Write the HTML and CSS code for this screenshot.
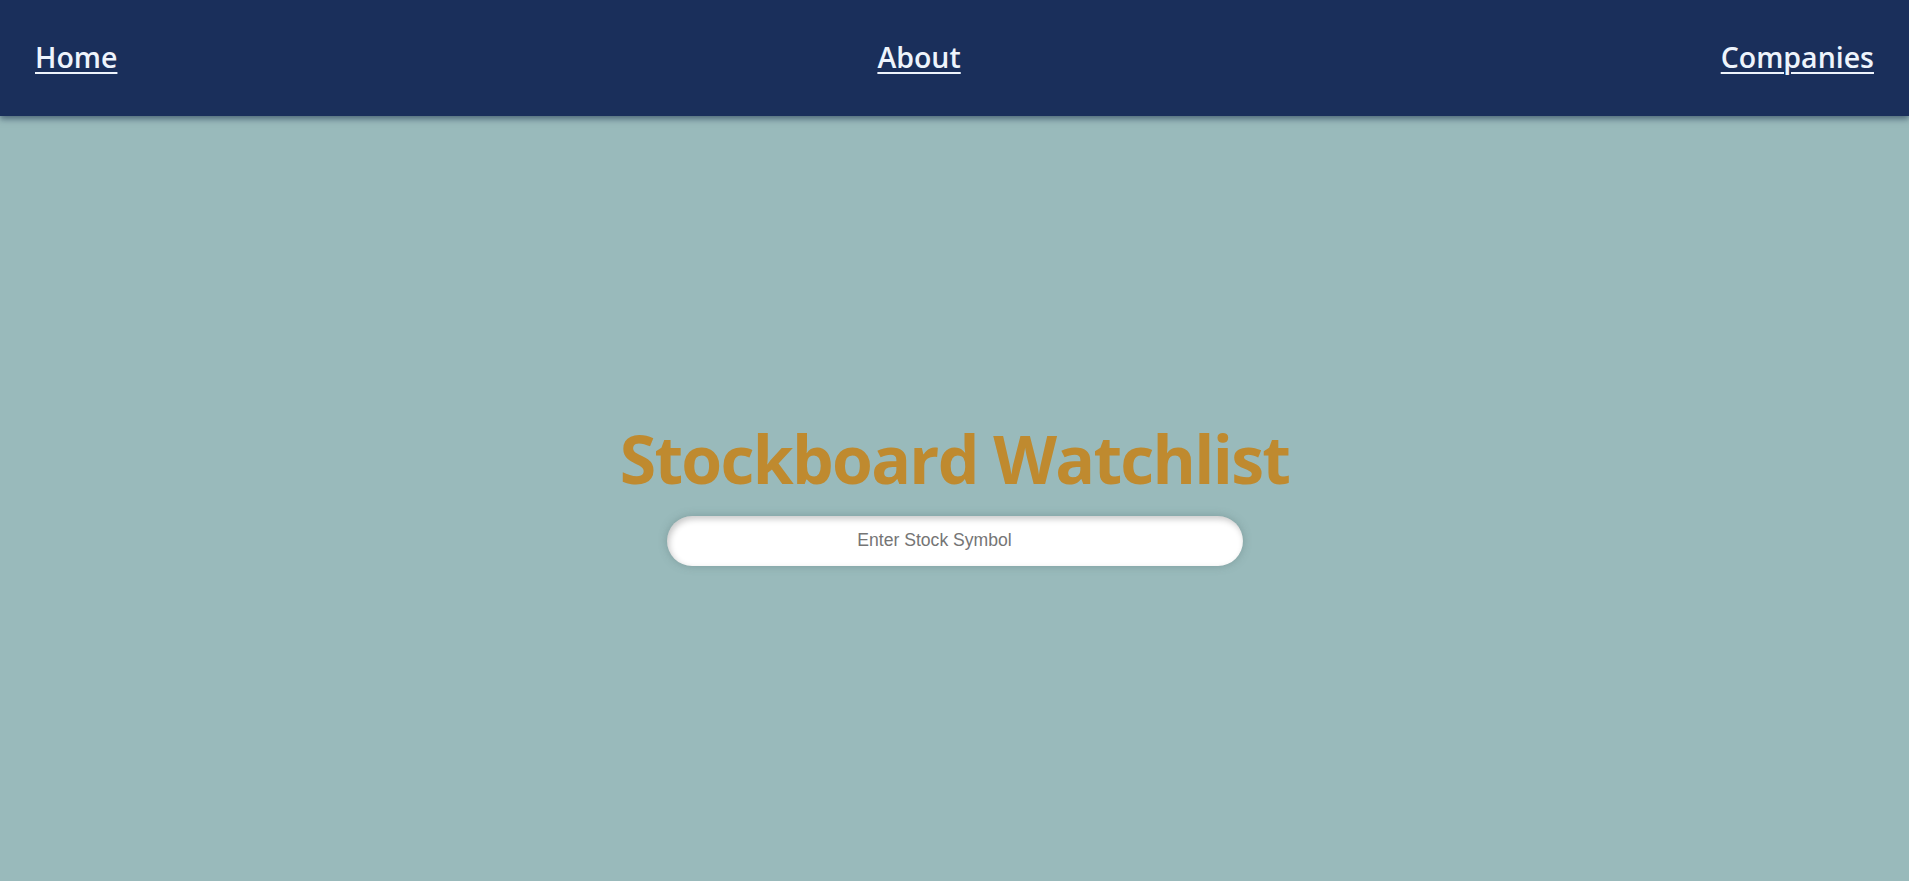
FILE: index.html
```html
<!DOCTYPE html>
<html lang="en">
<head>
<meta charset="utf-8">
<title>Stockboard Watchlist</title>
<link rel="stylesheet" href="styles.css">
</head>
<body>
<nav class="navbar">
  <a class="nav-link" href="#">Home</a>
  <a class="nav-link" href="#">About</a>
  <a class="nav-link" href="#">Companies</a>
</nav>
<main class="hero">
  <h1 class="title">Stockboard Watchlist</h1>
  <input class="search" type="text" placeholder="Enter Stock Symbol">
</main>
</body>
</html>
```
FILE: styles.css
```css
html, body {
  margin: 0;
  padding: 0;
  height: 100%;
}
body {
  background: #99babb;
  font-family: "Open Sans", "Noto Sans", sans-serif;
  overflow: hidden;
}
.navbar {
  position: relative;
  z-index: 1;
  height: 116px;
  background: #1a2f5b;
  display: flex;
  justify-content: space-between;
  align-items: center;
  padding: 0 35px;
  box-sizing: border-box;
  box-shadow: 0 3px 6px rgba(20, 40, 70, 0.55);
}
.nav-link {
  color: #eef4fc;
  font-size: 28.5px;
  font-weight: 600;
  text-decoration: underline;
  text-decoration-thickness: 2px;
  text-underline-offset: 4px;
  line-height: 1;
  margin-bottom: 2px;
}
.hero {
  height: calc(100vh - 116px);
  display: flex;
  flex-direction: column;
  align-items: center;
  justify-content: center;
  padding-bottom: 14px;
  box-sizing: border-box;
}
.title {
  margin: 0;
  color: #bf8a2f;
  font-size: 66px;
  font-weight: 700;
  line-height: 80px;
  letter-spacing: -1.7px;
}
.search {
  margin-top: 18px;
  width: 576px;
  height: 50px;
  box-sizing: border-box;
  border: none;
  border-radius: 25px;
  background: #fff;
  outline: none;
  text-align: center;
  padding: 0 40px 0 0;
  font-family: "Liberation Sans", Arial, sans-serif;
  font-size: 17.6px;
  color: #333;
  box-shadow: inset 2px 3px 6px rgba(0, 0, 0, 0.22), 0 0 8px rgba(90, 120, 120, 0.45);
}
.search::placeholder {
  color: #757575;
}
```
